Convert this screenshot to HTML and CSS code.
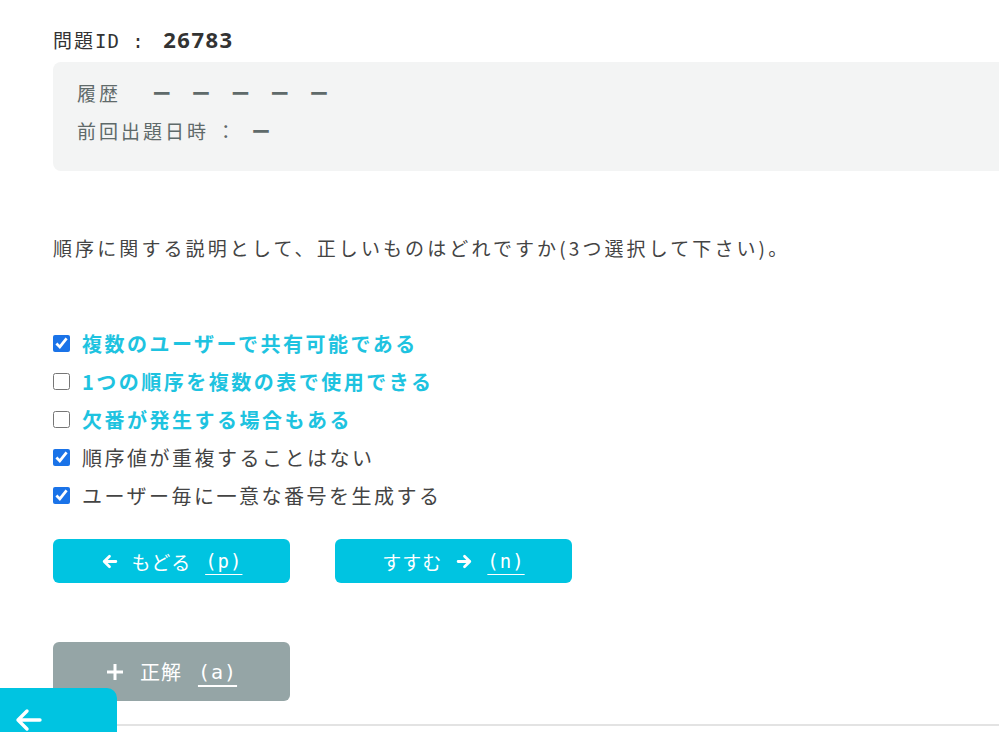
FILE: index.html
```html
<!DOCTYPE html>
<html lang="ja">
<head>
  <meta charset="UTF-8">
  <meta name="viewport" content="width=device-width, initial-scale=1.0">
  <title>問題</title>
  <link rel="stylesheet" href="styles.css">
</head>
<body>
  <div class="page">
    <h2 class="qid">問題<span class="mono">ID : </span><strong>26783</strong></h2>

    <div class="history">
      <div class="history-row">
        <span class="label">履歴</span>
        <span class="marks">ー ー ー ー ー</span>
      </div>
      <div class="history-row">
        <span class="label">前回出題日時 ：</span>
        <span class="marks">ー</span>
      </div>
    </div>

    <p class="question">順序に関する説明として、正しいものはどれですか(3つ選択して下さい)。</p>

    <ul class="choices">
      <li class="correct"><input type="checkbox" checked> <span>複数のユーザーで共有可能である</span></li>
      <li class="correct"><input type="checkbox"> <span>1つの順序を複数の表で使用できる</span></li>
      <li class="correct"><input type="checkbox"> <span>欠番が発生する場合もある</span></li>
      <li><input type="checkbox" checked> <span>順序値が重複することはない</span></li>
      <li><input type="checkbox" checked> <span>ユーザー毎に一意な番号を生成する</span></li>
    </ul>

    <div class="nav">
      <button class="btn btn-cyan">
        <svg width="17" height="17" viewBox="0 0 16 16"><path d="M14 8H3M8 3L3 8l5 5" fill="none" stroke="#fff" stroke-width="2.6" stroke-linecap="round" stroke-linejoin="round"/></svg>
        <span>もどる</span><u>(p)</u>
      </button>
      <button class="btn btn-cyan">
        <span>すすむ</span>
        <svg width="17" height="17" viewBox="0 0 16 16"><path d="M2 8h11M8 3l5 5-5 5" fill="none" stroke="#fff" stroke-width="2.6" stroke-linecap="round" stroke-linejoin="round"/></svg>
        <u>(n)</u>
      </button>
    </div>

    <button class="btn btn-gray btn-answer">
      <svg width="18" height="18" viewBox="0 0 18 18"><path d="M9 1v16M1 9h16" fill="none" stroke="#fff" stroke-width="3"/></svg>
      <span>正解</span><u>(a)</u>
    </button>

    <hr class="rule">
  </div>

  <a class="back-tab" href="#">
    <svg width="28" height="24" viewBox="0 0 28 24"><path d="M26 12H4M13 3L4 12l9 9" fill="none" stroke="#fff" stroke-width="3.4" stroke-linecap="round" stroke-linejoin="round"/></svg>
  </a>
</body>
</html>
```

FILE: styles.css
```css
body {
  margin: 0;
  overflow: hidden;
  font-family: "Noto Sans CJK JP", "Noto Sans", sans-serif;
  color: #444;
  background: #fff;
}

.page {
  width: 1100px;
  padding: 24px 0 0 53px;
}

.qid {
  margin: 0;
  font-size: 19px;
  font-weight: normal;
  line-height: 30px;
  color: #333;
  letter-spacing: 2px;
}

.qid .mono {
  font-family: "DejaVu Sans Mono", monospace;
  font-size: 19px;
  letter-spacing: 1px;
  white-space: pre;
}

.qid strong {
  font-family: "Open Sans", sans-serif;
  font-weight: bold;
  font-size: 22px;
  letter-spacing: 1.5px;
  margin-left: 6px;
}

.history {
  margin-top: 6px;
  height: 109px;
  box-sizing: border-box;
  padding: 12px 24px;
  background: #f3f4f4;
  border-radius: 8px;
}

.history-row {
  line-height: 38px;
  font-size: 19px;
  letter-spacing: 3px;
  color: #5f6a6a;
}

.history-row .label {
  margin-right: 6px;
}

.marks {
  font-weight: bold;
  color: #5f6a6a;
  letter-spacing: 8px;
}

.history-row:first-child .label {
  margin-right: 24px;
}

.question {
  margin: 63px 0 0;
  font-size: 19px;
  letter-spacing: 3.1px;
  line-height: 28px;
  color: #444;
}

.choices {
  list-style: none;
  margin: 62px 0 0;
  padding: 0;
}

.choices li {
  display: flex;
  align-items: center;
  height: 38px;
  font-size: 20px;
  letter-spacing: 2.5px;
  color: #444;
}

.choices li.correct {
  color: #1ec3e0;
  font-weight: bold;
}

.choices input {
  width: 17px;
  height: 17px;
  margin: 0 12px 0 0;
  accent-color: #1a73e8;
}

.nav {
  display: flex;
  gap: 45px;
  margin-top: 25px;
}

.btn {
  display: flex;
  align-items: center;
  justify-content: center;
  gap: 14px;
  width: 237px;
  height: 44px;
  border: none;
  border-radius: 6px;
  color: #fff;
  font-family: "Noto Sans CJK JP", sans-serif;
  font-size: 19px;
  letter-spacing: 1px;
  cursor: pointer;
}

.btn u {
  font-family: "DejaVu Sans Mono", monospace;
  font-size: 19px;
  text-underline-offset: 6px;
}

.btn-cyan {
  background: #00c4e1;
}

.btn-gray {
  background: #95a5a6;
}

.btn-answer {
  margin-top: 59px;
  height: 59px;
  font-size: 20px;
  gap: 16px;
}

.btn-answer u {
  font-size: 20px;
}

.rule {
  margin: 23px 0 0 -53px;
  border: none;
  border-top: 2px solid #e3e3e3;
}

.back-tab {
  position: fixed;
  left: 0;
  top: 688px;
  width: 117px;
  height: 60px;
  background: #00c4e1;
  border-radius: 0 10px 0 0;
  display: flex;
  padding: 20px 0 0 14px;
  box-sizing: border-box;
}
```
